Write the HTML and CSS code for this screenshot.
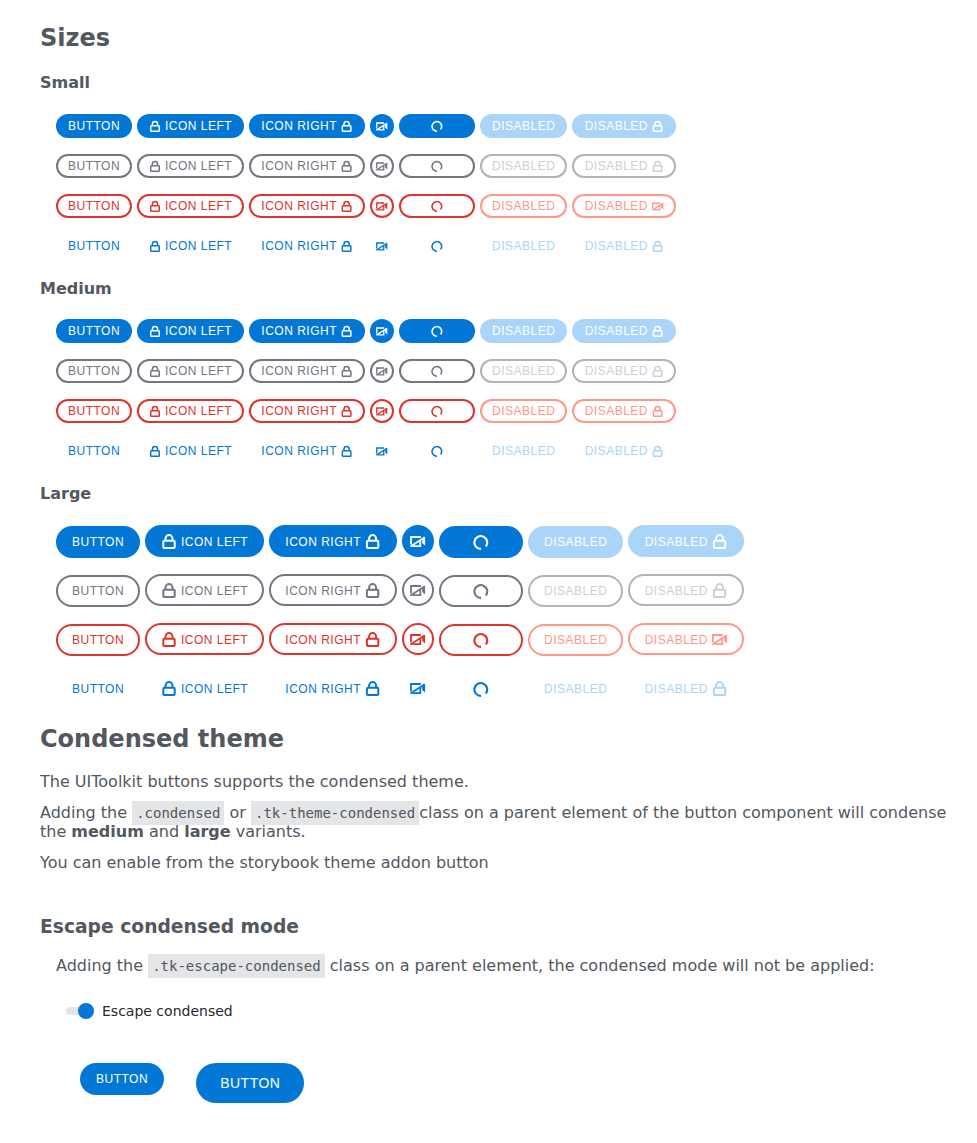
FILE: index.html
```html
<!DOCTYPE html>
<html lang="en">
<head>
<meta charset="utf-8">
<title>Buttons</title>
<link rel="stylesheet" href="styles.css">
</head>
<body>
<svg class="sprite" aria-hidden="true">
  <symbol id="lock" viewBox="0 0 16 16"><g fill="none" stroke="currentColor" stroke-width="2"><rect x="2.3" y="7.8" width="11.4" height="7.2" rx="1"/><path d="M4.5 8V5.6a3.5 3.5 0 0 1 7 0V8"/></g></symbol>
  <symbol id="camera" viewBox="0 0 16 16"><g fill="none" stroke="currentColor" stroke-width="1.8"><path d="M1 11.4V4h9.8"/><path d="M.4 13.6 14.4 4.4"/><path d="M2.4 13.1h7.9V7.4"/></g><path fill="currentColor" d="M12.2 5.6 15.1 3.6v9l-2.9-2.6z"/></symbol>
  <symbol id="loading" viewBox="0 0 16 16"><path fill="none" stroke="currentColor" stroke-width="2.1" d="M8 14.9a6.4 6.4 0 1 1 4.8-2.4"/></symbol>
</svg>
<main>
  <h2>Sizes</h2>
  <h4>Small</h4>
  <section class="sizes small" id="small"></section>
  <h4>Medium</h4>
  <section class="sizes small" id="medium"></section>
  <h4>Large</h4>
  <section class="sizes large" id="large"></section>
  <h2 class="condensed-title">Condensed theme</h2>
  <p>The UIToolkit buttons supports the condensed theme.</p>
  <p>Adding the <code>.condensed</code> or <code>.tk-theme-condensed</code>class on a parent element of the button component will condense the <b>medium</b> and <b>large</b> variants.</p>
  <p>You can enable from the storybook theme addon button</p>
  <h3>Escape condensed mode</h3>
  <p class="indent">Adding the <code>.tk-escape-condensed</code> class on a parent element, the condensed mode will not be applied:</p>
  <label class="switch"><span class="track"><span class="knob"></span></span><span class="switch-label">Escape condensed</span></label>
  <div class="escape">
    <button class="btn primary medium">BUTTON</button>
    <button class="btn primary big">BUTTON</button>
  </div>
</main>
<script src="buttons.js"></script>
</body>
</html>
```
FILE: styles.css
```css
body { margin: 0; background: #fff; color: #525760; font: 16px/19px "DejaVu Sans", sans-serif; }
main { padding: 24px 24px 0 40px; }
.sprite { display: none; }
h2 { margin: 0; font-size: 24px; line-height: 28px; }
h4 { margin: 0; font-size: 16px; line-height: 19px; }
h2 + h4 { margin-top: 21px; }
h3 { margin: 44px 0 0; font-size: 18.72px; line-height: 22px; }
p { margin: 0 0 12px; }
code { padding: 4px; background: #e3e5e7; font: 14px/16px "DejaVu Sans Mono", monospace; }
.sizes { display: grid; justify-content: start; column-gap: 5px; padding-left: 16px; }
.small { grid-template-columns: 76px 107px 116px 24px 76px 87px 104px; grid-auto-rows: 24px; row-gap: 16px; margin: 22px 0 21px; }
#medium { margin-top: 21px; }
.large { grid-template-columns: 84px 119px 128px 32px 84px 95px 116px; grid-auto-rows: 33px; row-gap: 16px; margin: 22px 0 20px; }
.condensed-title { margin-bottom: 19px; }
.btn { box-sizing: border-box; display: flex; align-items: center; gap: 4px; height: 24px; margin: 0; padding: 0 10px; border: 2px solid transparent; border-radius: 20px; background: none; font: 12px/16px "Liberation Sans", Arial, sans-serif; letter-spacing: .5px; white-space: nowrap; }
.btn svg { flex: none; width: 12px; height: 12px; }
.btn.right { justify-content: flex-end; padding-left: 0; }
.right .lock { transform: translateX(-.4px); }
.btn.round, .btn.loading { justify-content: center; padding: 0; }
.large .btn { height: 32px; padding: 0 14px; }
.large .btn.right { padding-left: 0; }
.large .label { padding-top: 2px; }
.large .btn svg { width: 16px; height: 16px; }
.large .btn.round { padding: 0; }
.large .btn.plain { margin-top: 1px; padding-bottom: 2px; }
.large .btn.loading { margin-top: 1px; padding: 0; }
.primary { background: #0277d6; color: #fff; }
.secondary { border-color: #717681; color: #717681; }
.danger { border-color: #dd342e; color: #dd342e; }
.tertiary { color: #0277d6; }
.primary.off { background: #aad5f9; }
.secondary.off { border-color: #b0b3ba; color: #cdcfd4; }
.danger.off { border-color: #ff9888; color: #ff9888; }
.tertiary.off { color: #aad5f9; }
.indent { margin: 18px 0 0 16px; }
.switch { display: flex; align-items: center; gap: 8px; margin: 26px 0 0 26px; color: #27292c; font-size: 14px; line-height: 17px; }
.switch-label { padding-top: 2px; }
.track { display: flex; justify-content: flex-end; align-items: center; width: 28px; height: 8px; border-radius: 4px; background: #e3e5e7; }
.knob { width: 16px; height: 16px; border-radius: 50%; background: #0277d6; }
.escape { display: flex; align-items: flex-start; gap: 32px; margin: 43px 0 0 40px; }
.medium { height: 32px; padding: 0 14px; }
.big { height: 40px; padding: 0 22px; font-size: 14px; width: 108px; }
```
FILE: buttons.js
```js
const icon = name => `<svg class="${name}"><use href="#${name}"/></svg>`;
const label = text => `<span class="label">${text}</span>`;
for (const size of ['small', 'medium', 'large']) {
  document.getElementById(size).innerHTML = ['primary', 'secondary', 'danger', 'tertiary'].map(kind => {
    const lastIcon = kind === 'danger' && size !== 'medium' ? 'camera' : 'lock';
    return `<button class="btn plain ${kind}">${label('BUTTON')}</button>
      <button class="btn ${kind}">${icon('lock')}${label('ICON LEFT')}</button>
      <button class="btn right ${kind}">${label('ICON RIGHT')}${icon('lock')}</button>
      <button class="btn round ${kind}">${icon('camera')}</button>
      <button class="btn loading ${kind}">${icon('loading')}</button>
      <button class="btn plain off ${kind}">${label('DISABLED')}</button>
      <button class="btn right off ${kind}">${label('DISABLED')}${icon(lastIcon)}</button>`;
  }).join('');
}
```
